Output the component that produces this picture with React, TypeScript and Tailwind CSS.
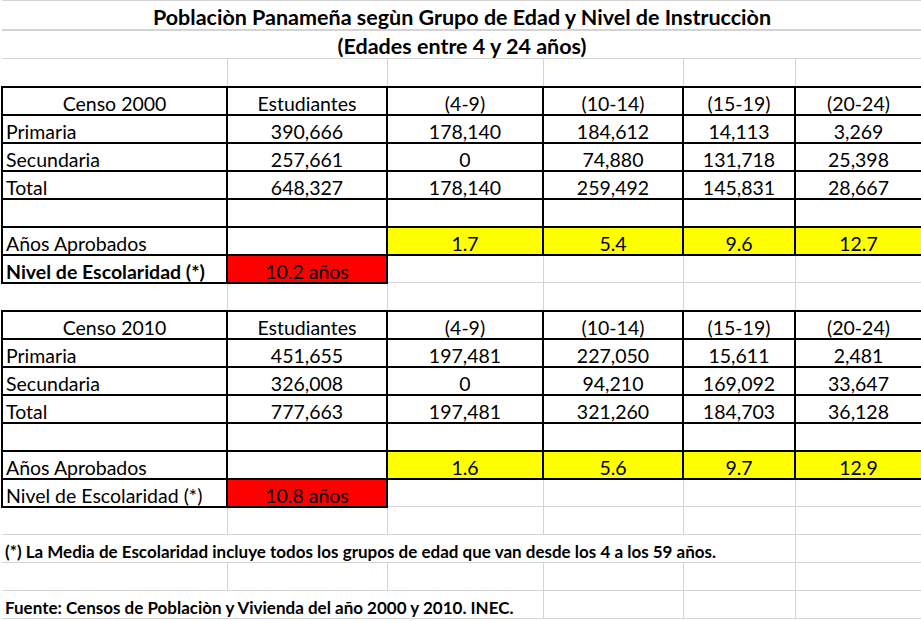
import type { ReactNode } from "react"

const grid = "border border-[#d4d4d4]"
const firstGrid = "border-y border-r border-[#d4d4d4]"
const box = "border-2 border-black"

const groups = ["(4-9)", "(10-14)", "(15-19)", "(20-24)"]

function Td({ children, className = "", span }: { children?: ReactNode; className?: string; span?: number }) {
    return (
        <td
            colSpan={span}
            className={`p-0 pl-[3px] pr-[3px] pt-[5px] align-middle whitespace-nowrap leading-[21px] ${className}`}
        >
            {children}
        </td>
    )
}

interface CensusProps {
    year: string
    rows: string[][]
    years: string[]
    nivel: string
    boldNivel?: boolean
}

function Census({ year, rows, years, nivel, boldNivel }: CensusProps) {
    return (
        <>
            <tr className="h-[28px]">
                <Td className={`${box} text-center`}>Censo {year}</Td>
                <Td className={`${box} text-center`}>Estudiantes</Td>
                {groups.map((g) => (
                    <Td key={g} className={`${box} text-center`}>{g}</Td>
                ))}
            </tr>
            {rows.map((r) => (
                <tr key={r[0]} className="h-[28px]">
                    <Td className={box}>{r[0]}</Td>
                    {r.slice(1).map((v, i) => (
                        <Td key={i} className={`${box} text-center`}>{v}</Td>
                    ))}
                </tr>
            ))}
            <tr className="h-[28px]">
                {[0, 1, 2, 3, 4, 5].map((i) => (
                    <Td key={i} className={box} />
                ))}
            </tr>
            <tr className="h-[28px]">
                <Td className={box}>Años Aprobados</Td>
                <Td className={box} />
                {years.map((y, i) => (
                    <Td key={i} className={`${box} bg-[#ffff00] text-center`}>{y}</Td>
                ))}
            </tr>
            <tr className="h-[28px]">
                <Td className={`${box} ${boldNivel ? "font-bold" : ""}`}>Nivel de Escolaridad (*)</Td>
                <Td className={`${box} bg-[#ff0000] text-center`}>{nivel}</Td>
                {[0, 1, 2, 3].map((i) => (
                    <Td key={i} className={grid} />
                ))}
            </tr>
        </>
    )
}

function EmptyRow() {
    return (
        <tr className="h-[28px]">
            <Td className={firstGrid} />
            {[0, 1, 2, 3, 4].map((i) => (
                <Td key={i} className={grid} />
            ))}
        </tr>
    )
}

export default function App() {
    return (
        <div className="w-[921px] h-[621px] overflow-hidden bg-white text-black [font-family:Lato,sans-serif] text-[19.5px]">
            <table className="table-fixed border-collapse w-[920px] ml-[1px]">
                <colgroup>
                    <col className="w-[225px]" />
                    <col className="w-[160px]" />
                    <col className="w-[156px]" />
                    <col className="w-[140px]" />
                    <col className="w-[112px]" />
                    <col className="w-[127px]" />
                </colgroup>
                <tbody>
                    <tr className="h-[29px]">
                        <Td span={6} className="border-t border-b-2 border-[#d4d4d4] text-center font-bold text-[21.5px] pt-[3px]">
                            Poblaciòn Panameña segùn Grupo de Edad y Nivel de Instrucciòn
                        </Td>
                    </tr>
                    <tr className="h-[29px]">
                        <Td span={6} className="border-b border-[#d4d4d4] text-center font-bold text-[21.5px] pt-[3px]">
                            (Edades entre 4 y 24 años)
                        </Td>
                    </tr>
                    <EmptyRow />
                    <Census
                        year="2000"
                        rows={[
                            ["Primaria", "390,666", "178,140", "184,612", "14,113", "3,269"],
                            ["Secundaria", "257,661", "0", "74,880", "131,718", "25,398"],
                            ["Total", "648,327", "178,140", "259,492", "145,831", "28,667"],
                        ]}
                        years={["1.7", "5.4", "9.6", "12.7"]}
                        nivel="10.2 años"
                        boldNivel
                    />
                    <EmptyRow />
                    <Census
                        year="2010"
                        rows={[
                            ["Primaria", "451,655", "197,481", "227,050", "15,611", "2,481"],
                            ["Secundaria", "326,008", "0", "94,210", "169,092", "33,647"],
                            ["Total", "777,663", "197,481", "321,260", "184,703", "36,128"],
                        ]}
                        years={["1.6", "5.6", "9.7", "12.9"]}
                        nivel="10.8 años"
                    />
                    <EmptyRow />
                    <tr className="h-[28px]">
                        <Td span={5} className={`${firstGrid} font-bold text-[17px]`}>
                            (*) La Media de Escolaridad incluye todos los grupos de edad que van desde los 4 a los 59 años.
                        </Td>
                        <Td className={grid} />
                    </tr>
                    <EmptyRow />
                    <tr className="h-[28px]">
                        <Td span={3} className={`${firstGrid} font-bold text-[17px]`}>
                            Fuente: Censos de Poblaciòn y Vivienda del año 2000 y 2010. INEC.
                        </Td>
                        <Td className={grid} />
                        <Td className={grid} />
                        <Td className={grid} />
                    </tr>
                </tbody>
            </table>
        </div>
    )
}
